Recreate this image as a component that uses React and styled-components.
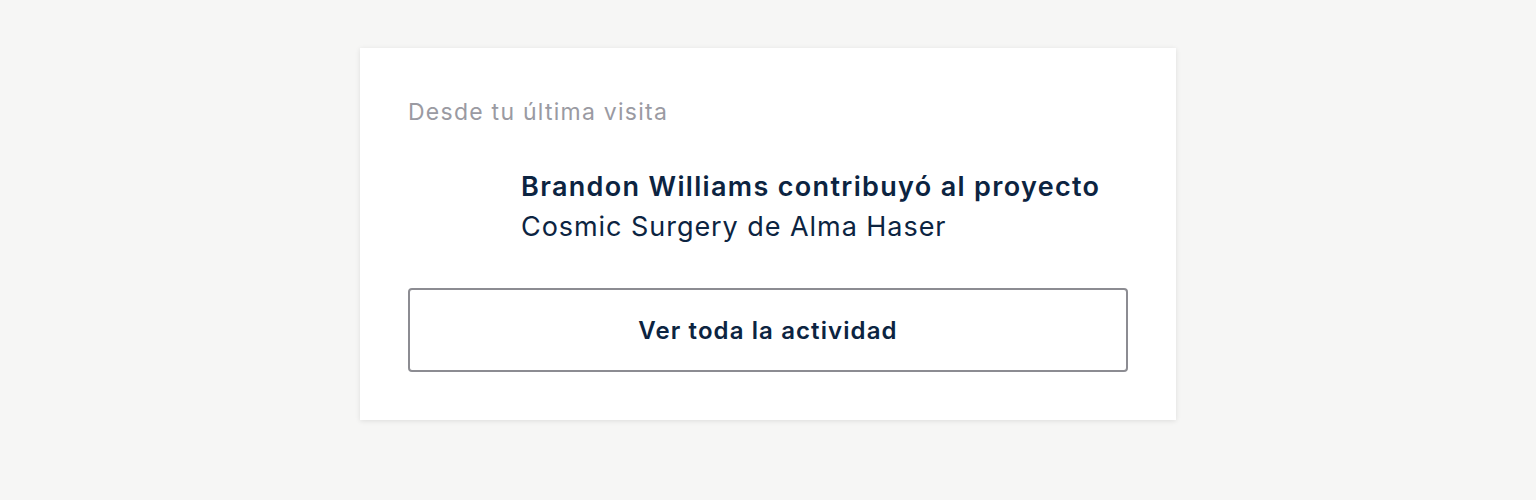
import React from "react"
import styled, { createGlobalStyle } from "styled-components"

const Global = createGlobalStyle`
  body {
    margin: 0;
    background: #f6f6f5;
    font-family: Inter, "Liberation Sans", sans-serif;
  }
`

export default function App() {
  const activity = [
    { who: "Brandon Williams", action: "contribuyó al proyecto", what: "Cosmic Surgery de Alma Haser" },
  ]

  return (
    <>
      <Global />
      <Page>
        <Card>
          <Heading>Desde tu última visita</Heading>
          <List>
            {activity.map((a) => (
              <Item key={a.who}>
                <Avatar />
                <ItemText>
                  <Title>{a.who} {a.action}</Title>
                  <Sub>{a.what}</Sub>
                </ItemText>
              </Item>
            ))}
          </List>
          <Button>Ver toda la actividad</Button>
        </Card>
      </Page>
    </>
  )
}

const Page = styled.main`
  display: flex;
  justify-content: center;
  align-items: flex-start;
  padding-top: 48px;
  min-height: 500px;
  box-sizing: border-box;
`

const Card = styled.section`
  width: 816px;
  box-sizing: border-box;
  padding: 48px;
  background: #fff;
  box-shadow: 0 1px 5px rgba(0, 0, 0, 0.1);
  display: flex;
  flex-direction: column;
`

const Heading = styled.h2`
  margin: 0;
  font-size: 23px;
  font-weight: 400;
  line-height: 32px;
  letter-spacing: 1.25px;
  color: #9a9aa2;
`

const List = styled.ul`
  list-style: none;
  margin: 0;
  padding: 39px 0 41px 0;
`

const Item = styled.li`
  display: flex;
  gap: 49px;
`

const Avatar = styled.div`
  width: 64px;
  height: 64px;
  flex-shrink: 0;
`

const ItemText = styled.div`
  display: flex;
  flex-direction: column;
  color: #0c2441;
  font-size: 27px;
  line-height: 40px;
`

const Title = styled.span`
  font-weight: 600;
  letter-spacing: 1.33px;
`

const Sub = styled.span`
  font-weight: 400;
  letter-spacing: 0.95px;
`

const Button = styled.button`
  height: 84px;
  width: 100%;
  border: 2px solid #8c8c92;
  border-radius: 4px;
  background: #fff;
  color: #0c2441;
  font-family: Inter, "Liberation Sans", sans-serif;
  font-size: 24px;
  font-weight: 600;
  letter-spacing: 1.1px;
  cursor: pointer;
`
